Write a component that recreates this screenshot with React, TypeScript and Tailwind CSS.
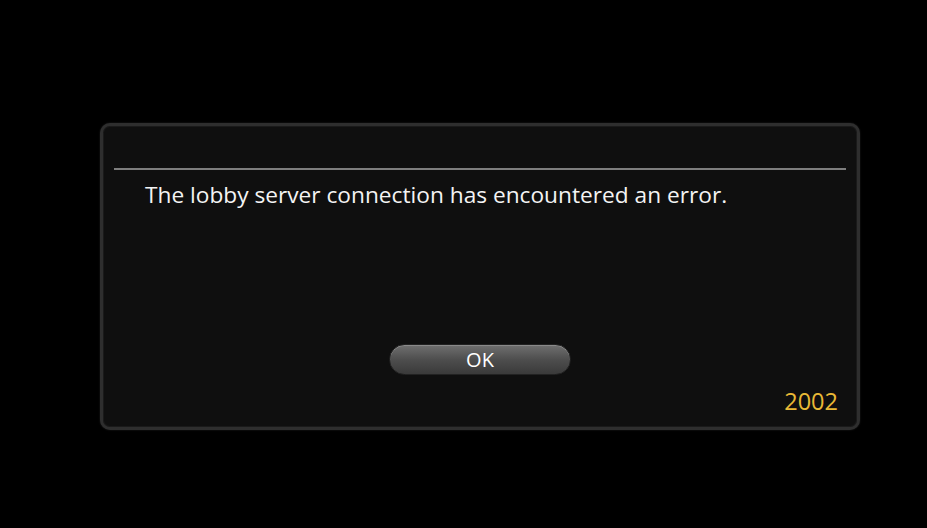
const font = { fontFamily: '"Open Sans", "Noto Sans", sans-serif' };

export default function App() {
  return (
    <div className="w-[927px] h-[528px] bg-black overflow-hidden pt-[123px] pl-[100px]" style={font}>
      <div className="w-[760px] h-[307px] rounded-[10px] border-[3px] border-[#2e2e2e] bg-[#0f0f0f] shadow-[inset_0_0_0_1px_#1a1a1a,0_0_2px_#222] flex flex-col">
        <div className="mt-[42px] mx-[11px] h-[2px] bg-[#7e7e7e]" />
        <p className="mt-[9px] pl-[42px] text-[22.7px] leading-[32px] text-[#f4f4f4]">
          The lobby server connection has encountered an error.
        </p>
        <div className="mt-[133px] flex justify-center">
          <button className="w-[182px] h-[31px] rounded-full border border-[#222] bg-gradient-to-b from-[#707070] via-[#4e4e4e] to-[#3a3a3a] shadow-[inset_0_1px_0_#8a8a8a] text-white text-[20px] leading-none flex items-center justify-center">
            OK
          </button>
        </div>
        <div className="mt-[11px] pr-[19px] text-right text-[23.5px] leading-[30px] text-[#e9b936]">
          2002
        </div>
      </div>
    </div>
  );
}
